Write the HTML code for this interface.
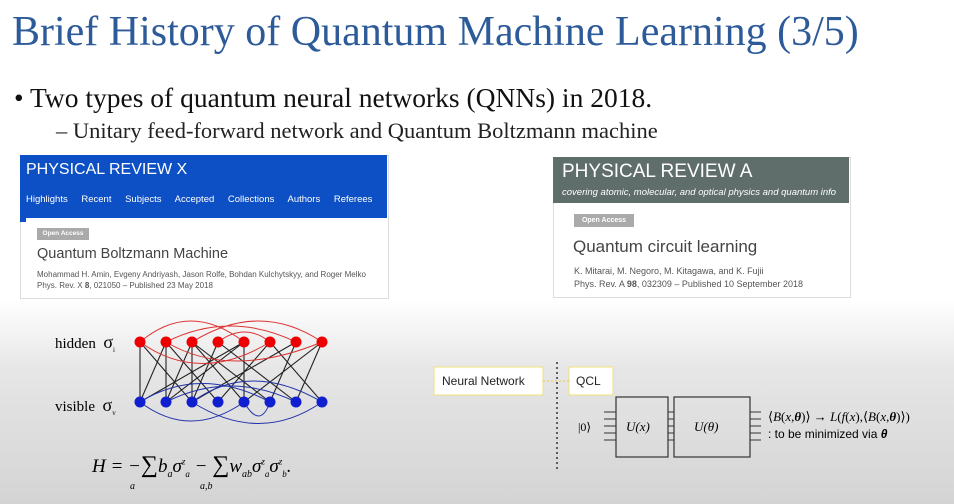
<!DOCTYPE html>
<html><head><meta charset="utf-8"><style>
body{margin:0;width:954px;height:504px;overflow:hidden;font-family:"Liberation Sans",sans-serif;
background:linear-gradient(#fff 0,#fff 300px,#e6e6e6 370px,#d4d4d4 504px);position:relative}
.a{position:absolute;white-space:nowrap}
.serif{font-family:"Liberation Serif",serif}
</style></head><body>
<div class="a serif" style="left:12px;top:8px;font-size:42px;color:#2d5b9a">Brief History of Quantum Machine Learning (3/5)</div>
<div class="a serif" style="left:14px;top:82px;font-size:27.5px;color:#111">• Two types of quantum neural networks (QNNs) in 2018.</div>
<div class="a serif" style="left:56px;top:118px;font-size:22.5px;color:#222">– Unitary feed-forward network and Quantum Boltzmann machine</div>

<!-- PRX card -->
<div class="a" style="left:20px;top:155px;width:367px;height:142px;background:#fff;border:1px solid #ddd"></div>
<div class="a" style="left:20px;top:155px;width:367px;height:67px;background:#0d4fc4"></div>
<div class="a" style="left:26px;top:218px;width:361px;height:79px;background:#fff"></div>
<div class="a" style="left:26px;top:161px;font-size:16px;color:#fff">PHYSICAL REVIEW X</div>
<div class="a" style="left:26px;top:194px;font-size:9.5px;color:#fff;word-spacing:11px">Highlights Recent Subjects Accepted Collections Authors Referees</div>
<div class="a" style="left:37px;top:228px;width:52px;height:12px;background:#aaa;color:#fff;font-size:6.5px;font-weight:bold;line-height:12px;text-align:center">Open Access</div>
<div class="a" style="left:37px;top:246px;font-size:14.5px;color:#444">Quantum Boltzmann Machine</div>
<div class="a" style="left:37px;top:270px;font-size:8px;color:#555">Mohammad H. Amin, Evgeny Andriyash, Jason Rolfe, Bohdan Kulchytskyy, and Roger Melko</div>
<div class="a" style="left:37px;top:281px;font-size:8px;color:#555">Phys. Rev. X <b>8</b>, 021050 – Published 23 May 2018</div>

<!-- PRA card -->
<div class="a" style="left:553px;top:157px;width:296px;height:139px;background:#fff;border:1px solid #ddd"></div>
<div class="a" style="left:553px;top:157px;width:296px;height:46px;background:#5f6e6b"></div>
<div class="a" style="left:558px;top:203px;width:291px;height:93px;background:#fff"></div>
<div class="a" style="left:562px;top:161px;font-size:19px;color:#fff">PHYSICAL REVIEW A</div>
<div class="a" style="left:562px;top:187px;font-size:9.5px;color:#fff;font-style:italic;width:286px;overflow:hidden">covering atomic, molecular, and optical physics and quantum info</div>
<div class="a" style="left:574px;top:214px;width:60px;height:13px;background:#aaa;color:#fff;font-size:7px;font-weight:bold;line-height:13px;text-align:center">Open Access</div>
<div class="a" style="left:573px;top:237px;font-size:17px;color:#444">Quantum circuit learning</div>
<div class="a" style="left:574px;top:266px;font-size:9px;color:#555">K. Mitarai, M. Negoro, M. Kitagawa, and K. Fujii</div>
<div class="a" style="left:574px;top:279px;font-size:9px;color:#555">Phys. Rev. A <b>98</b>, 032309 – Published 10 September 2018</div>

<!-- network -->
<div class="a serif" style="left:55px;top:332px;font-size:15px">hidden&nbsp;&nbsp;<span style="font-size:18px">σ</span><sub style="font-size:7px">i</sub></div>
<div class="a serif" style="left:55px;top:395px;font-size:15px">visible&nbsp;&nbsp;<span style="font-size:18px">σ</span><sub style="font-size:7px">v</sub></div>
<svg class="a" style="left:0;top:0" width="954" height="504">
<g stroke="#222" stroke-width="1.1" fill="none">
<path d="M140 342L140 402M140 342L192 402M166 342L166 402M166 342L218 402M166 342L140 402M192 342L244 402M192 342L166 402M192 342L270 402M218 342L192 402M218 342L296 402M244 342L244 402M244 342L140 402M270 342L218 402M270 342L322 402M296 342L270 402M296 342L192 402M322 342L296 402M322 342L244 402M192 342L192 402M244 342L166 402"/>
</g>
<g stroke="#d33" stroke-width="1" fill="none">
<path d="M140 342Q190 300 244 342M166 342Q230 310 296 342M192 342Q260 300 322 342M218 342Q245 322 270 342M140 342Q200 385 270 342M166 342Q230 380 322 342"/>
</g>
<g stroke="#2233aa" stroke-width="1" fill="none">
<path d="M140 402Q200 365 270 402M166 402Q230 370 296 402M192 402Q250 360 322 402M140 402Q190 440 244 402M192 402Q260 445 322 402M244 402Q260 430 270 402"/>
</g>
<g fill="#e00"><circle cx="140" cy="342" r="5.5"/><circle cx="166" cy="342" r="5.5"/><circle cx="192" cy="342" r="5.5"/><circle cx="218" cy="342" r="5.5"/><circle cx="244" cy="342" r="5.5"/><circle cx="270" cy="342" r="5.5"/><circle cx="296" cy="342" r="5.5"/><circle cx="322" cy="342" r="5.5"/></g>
<g fill="#1020d0"><circle cx="140" cy="402" r="5.5"/><circle cx="166" cy="402" r="5.5"/><circle cx="192" cy="402" r="5.5"/><circle cx="218" cy="402" r="5.5"/><circle cx="244" cy="402" r="5.5"/><circle cx="270" cy="402" r="5.5"/><circle cx="296" cy="402" r="5.5"/><circle cx="322" cy="402" r="5.5"/></g>
<!-- QCL -->
<rect x="434" y="367" width="109" height="28" fill="#fff" stroke="#f0e27a"/>
<rect x="569" y="367" width="44" height="28" fill="#fff" stroke="#f0e27a"/>
<path d="M543 381H569" stroke="#e8c84a" stroke-dasharray="2 2"/>
<path d="M557 362V470" stroke="#333" stroke-width="1.5" stroke-dasharray="2 3"/>
<rect x="616" y="397" width="52" height="60" fill="none" stroke="#333" stroke-width="1.2"/>
<rect x="674" y="397" width="76" height="60" fill="none" stroke="#333" stroke-width="1.2"/>
<g stroke="#333"><path d="M604 412h12M604 419h12M604 426h12M604 433h12M604 440h12M668 412h6M668 419h6M668 426h6M668 433h6M668 440h6M750 412h11M750 419h11M750 426h11M750 433h11M750 440h11"/></g>
</svg>
<div class="a" style="left:442px;top:374px;font-size:12px;color:#222">Neural Network</div>
<div class="a" style="left:576px;top:374px;font-size:12px;color:#222">QCL</div>
<div class="a serif" style="left:578px;top:420px;font-size:12px">|0⟩</div>
<div class="a serif" style="left:626px;top:419px;font-size:13px;font-style:italic">U(x)</div>
<div class="a serif" style="left:694px;top:419px;font-size:13px;font-style:italic">U(θ)</div>
<div class="a serif" style="left:768px;top:409px;font-size:13px">⟨<i>B</i>(<i>x</i>,<b><i>θ</i></b>)⟩ → <i>L</i>(<i>f</i>(<i>x</i>),⟨<i>B</i>(<i>x</i>,<b><i>θ</i></b>)⟩)</div>
<div class="a" style="left:768px;top:427px;font-size:12px">: to be minimized via <b><i>θ</i></b></div>
<div class="a serif" style="left:92px;top:452px;font-size:19px;font-style:italic">H = −<span style="font-size:24px;font-style:normal">∑</span>b<sub style="font-size:10px">a</sub>σ<sup style="font-size:9px">z</sup><sub style="font-size:9px">a</sub> − <span style="font-size:24px;font-style:normal">∑</span>w<sub style="font-size:10px">ab</sub>σ<sup style="font-size:9px">z</sup><sub style="font-size:9px">a</sub>σ<sup style="font-size:9px">z</sup><sub style="font-size:9px">b</sub>.</div>
<div class="a serif" style="left:130px;top:481px;font-size:10px;font-style:italic">a</div>
<div class="a serif" style="left:200px;top:481px;font-size:10px;font-style:italic">a,b</div>
</body></html>
